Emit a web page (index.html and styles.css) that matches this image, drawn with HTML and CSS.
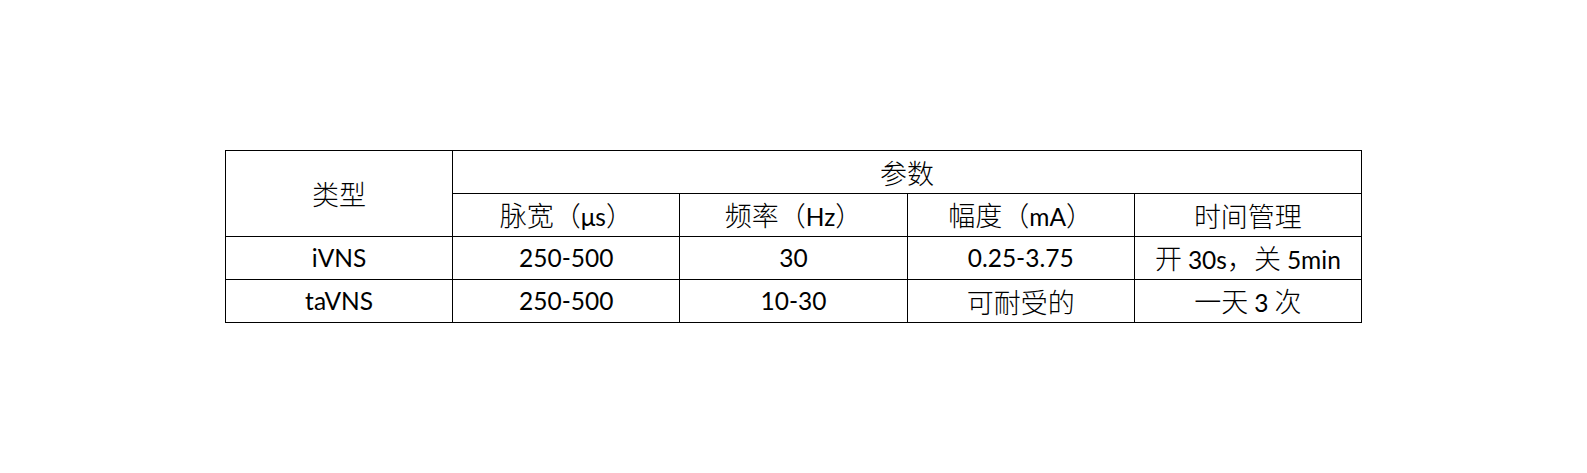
FILE: index.html
```html
<!DOCTYPE html>
<html lang="zh">
<head>
<meta charset="utf-8">
<title>参数表</title>
<link rel="stylesheet" href="styles.css">
</head>
<body>
<table class="params">
  <colgroup>
    <col class="c"><col class="c"><col class="c"><col class="c"><col class="c">
  </colgroup>
  <tr>
    <td rowspan="2" class="cn">类型</td>
    <td colspan="4" class="cn">参数</td>
  </tr>
  <tr>
    <td class="cn">脉宽（<span class="lt">μs</span>）</td>
    <td class="cn">频率（<span class="lt">Hz</span>）</td>
    <td class="cn">幅度（<span class="lt">mA</span>）</td>
    <td class="cn">时间管理</td>
  </tr>
  <tr>
    <td class="lt">iVNS</td>
    <td class="lt">250-500</td>
    <td class="lt">30</td>
    <td class="lt">0.25-3.75</td>
    <td class="cn">开 <span class="lt">30s</span>，关 <span class="lt">5min</span></td>
  </tr>
  <tr>
    <td class="lt">taVNS</td>
    <td class="lt">250-500</td>
    <td class="lt">10-30</td>
    <td class="cn">可耐受的</td>
    <td class="cn">一天 <span class="lt">3</span> 次</td>
  </tr>
</table>
</body>
</html>
```

FILE: styles.css
```css
html, body {
  margin: 0;
  padding: 0;
  background: #ffffff;
}
body {
  padding-top: 150px;
}
.params {
  border-collapse: collapse;
  margin: 0 auto;
  width: 1137px;
  table-layout: fixed;
  color: #000;
}
.params .c {
  width: 20%;
}
.params td {
  border: 1px solid #000;
  height: 42px;
  padding: 0;
  text-align: center;
  vertical-align: middle;
  line-height: 1;
  white-space: nowrap;
}
.cn {
  font-family: "Noto Sans CJK SC", "Noto Sans", sans-serif;
  font-size: 27px;
  font-weight: 300;
}
.lt {
  font-family: Lato, "Noto Sans CJK SC", sans-serif;
  font-size: 24.5px;
  font-weight: 400;
}
```
